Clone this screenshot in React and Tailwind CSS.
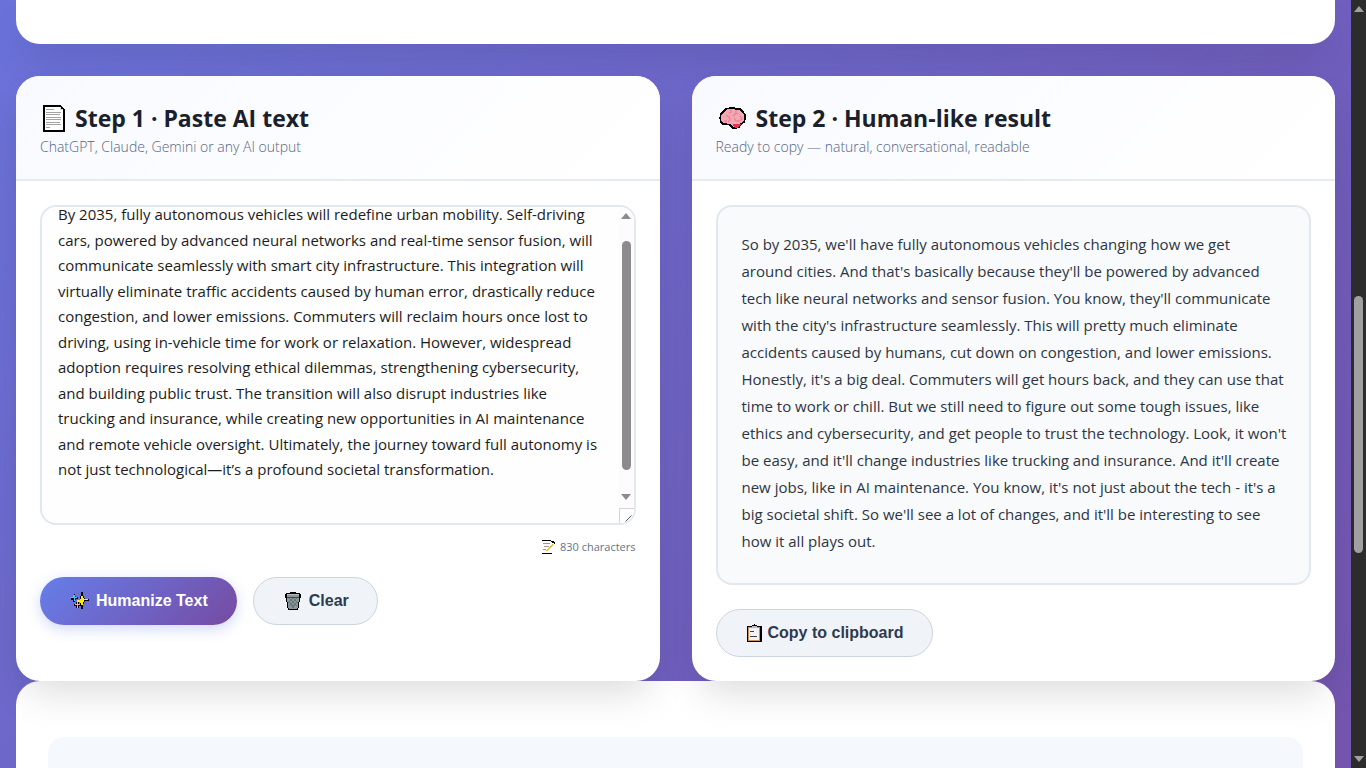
import { useLayoutEffect, useRef, useState } from "react";

const AI_TEXT =
  "By 2035, fully autonomous vehicles will redefine urban mobility. Self-driving cars, powered by advanced neural networks and real-time sensor fusion, will communicate seamlessly with smart city infrastructure. This integration will virtually eliminate traffic accidents caused by human error, drastically reduce congestion, and lower emissions. Commuters will reclaim hours once lost to driving, using in-vehicle time for work or relaxation. However, widespread adoption requires resolving ethical dilemmas, strengthening cybersecurity, and building public trust. The transition will also disrupt industries like trucking and insurance, while creating new opportunities in AI maintenance and remote vehicle oversight. Ultimately, the journey toward full autonomy is not just technological—it’s a profound societal transformation.\n\n";

const HUMAN_TEXT = `So by 2035, we'll have fully autonomous vehicles changing how we get
around cities. And that's basically because they'll be powered by advanced
tech like neural networks and sensor fusion. You know, they'll communicate
with the city's infrastructure seamlessly. This will pretty much eliminate
accidents caused by humans, cut down on congestion, and lower emissions.
Honestly, it's a big deal. Commuters will get hours back, and they can use that
time to work or chill. But we still need to figure out some tough issues, like
ethics and cybersecurity, and get people to trust the technology. Look, it won't
be easy, and it'll change industries like trucking and insurance. And it'll create
new jobs, like in AI maintenance. You know, it's not just about the tech - it's a
big societal shift. So we'll see a lot of changes, and it'll be interesting to see
how it all plays out.`;

function PageIcon() {
  return (
    <svg width="22" height="27" viewBox="0 0 22 27" shapeRendering="crispEdges" aria-hidden="true">
      <path d="M0 0h18v1h1v1h1v1h1v1h1v23H0z" fill="#000" />
      <path d="M2 2h15v2h1v1h2v20H2z" fill="#fff" />
      <path d="M17 2h1v2h2v1h-3z" fill="#d9d9d9" />
      <path
        d="M3 4h8v1H3zM3 7h15v1H3zM3 9h14v1H3zM3 12h15v1H3zM3 14h15v1H3zM3 17h14v1H3zM3 19h15v1H3zM3 22h4v1H3z"
        fill="#a3a3a3"
      />
    </svg>
  );
}

function BrainIcon() {
  return (
    <svg width="27" height="22" viewBox="0 0 27 22" aria-hidden="true">
      <path
        d="M11 1h4l2 1h4l3 3 2 3v4l-1 3-3 2-2 3-3 1h-3l-3-3-4-1H4l-2-2-1-4 1-4 3-3 2-2z"
        fill="#f4a6b4"
        stroke="#000"
        strokeWidth="1.500"
        shapeRendering="crispEdges"
      />
      <path d="M14 17h8l-1 1-1 2-2 1h-2l-2-3z" fill="#e0384e" shapeRendering="crispEdges" />
      <path
        d="M12 2v3l-2 1M7 8l3 2 1 3-2 2M14 9l3-3 2 1M17 6V3M15 11l2 3h3M21 9l2 3-3 2M5 14h3"
        fill="none"
        stroke="#e78595"
        strokeWidth="1.300"
      />
    </svg>
  );
}

function MemoIcon() {
  return (
    <svg width="14" height="14" viewBox="0 0 14 14" shapeRendering="crispEdges" aria-hidden="true">
      <path d="M0 0h9v1H0zM0 13h10v1H0z" fill="#000" />
      <path d="M1 3h7v1H1zM2 6h5v1H2zM1 9h3v1H1z" fill="#999" />
      <path d="M4 10h1V9h1V8h1V7h1V6h1V5h1V4h1v2h-1v1H9v1H8v1H7v1H6v1H4z" fill="#f5b82e" />
      <path d="M9 1h3v1h1v2h-1V3h-2V2H9z" fill="#000" />
      <path d="M10 3h1v1h-1z" fill="#fff" />
    </svg>
  );
}

function SparklesIcon() {
  return (
    <svg width="21" height="18" viewBox="-2 0 21 18" shapeRendering="crispEdges" aria-hidden="true">
      <path d="M10 0h2v4h1v2h1v1h4v2h-4v1h-1v2h-1v5h-2v-5H9v-2H7V8h2V4h1z" fill="#000" />
      <path d="M10 4h2v2h1v1h4v1h-4v2h-1v3h-2v-2H9v-1H6V8h3V7h1z" fill="#ffe81a" />
      <path d="M3 2h1v2h1v1h2v2H5v1H4v2H2V8H0V5h2V3h1z" fill="#000" />
      <path d="M2 3h2v2h2v1H4v3H3V6H0V5h2z" fill="#33cdf5" />
      <path d="M5 10h3v2h2v2H8v2H5v-2H3v-2h2z" fill="#000" />
      <path d="M6 10h1v2h2v1H7v3H6v-3H4v-1h2z" fill="#ff9fc4" />
    </svg>
  );
}

function TrashIcon() {
  return (
    <svg width="21" height="18" viewBox="-3 0 21 18" shapeRendering="crispEdges" aria-hidden="true">
      <path d="M5 0h6v1h4v1h1v4h-1v4h-1v6h-1v2H3v-2H2v-6H1V6H0V2h1V1h4z" fill="#000" />
      <path d="M2 2h12v3H2zM2 6h12v4h-1v6h-1v1H4v-1H3v-6H2z" fill="#8b989b" />
      <path d="M2 2h12v1H2z" fill="#b4bfc1" />
      <path
        d="M4 6l8 8M8 6l5 5M4 10l5 6M12 6l-8 8M8 6l-5 5M12 10l-5 6"
        stroke="#67757a"
        fill="none"
      />
      <path d="M2 5h12v1H2z" fill="#3d484b" />
    </svg>
  );
}

function ClipboardIcon() {
  return (
    <svg width="17" height="18" viewBox="-2 0 17 18" shapeRendering="crispEdges" aria-hidden="true">
      <path d="M7 0h1v1h2v1h5v16H0V2h5V1h2z" fill="#000" />
      <path d="M1 3h12v14H1z" fill="#c98e5a" />
      <path d="M2 4h10v12H2z" fill="#f4f1f3" />
      <path d="M5 2h5v2H5z" fill="#b9b9b9" />
      <path d="M3 7h4v1H3zM3 12h7v1H3z" fill="#3f3f46" />
    </svg>
  );
}

function Arrow({ down, className }) {
  return (
    <svg width="10" height="6" viewBox="0 0 10 6" className={className} aria-hidden="true">
      <path d={down ? "M0 0h10L5 6z" : "M0 6h10L5 0z"} fill="currentColor" />
    </svg>
  );
}

function StepCard({ icon, title, subtitle, children }) {
  return (
    <section className="min-w-0 overflow-hidden rounded-3xl bg-white shadow-[0_20px_40px_-10px_rgba(0,0,0,0.15)]">
      <header className="border-b-2 border-[#e6ebf0] bg-linear-[135deg] from-[#f8faff] to-white px-6 pt-6 pb-[22px]">
        <h2 className="flex h-9 items-center gap-[10px] pl-[3px] text-[23px] font-bold text-[#1a202c]">
          {icon}
          {title}
        </h2>
        <p className="text-sm/[21px] font-light text-[#56657e]">{subtitle}</p>
      </header>
      <div className="p-6">{children}</div>
    </section>
  );
}

const pill =
  "flex h-12 cursor-pointer items-center gap-1.5 rounded-full border px-7 font-['Liberation_Sans',Arial,sans-serif] text-base font-bold";
const pillLight = "border-[#cbd5e0] bg-[#f0f4f9] text-[#2d3b50]";

export default function App() {
  const [text, setText] = useState(AI_TEXT);
  const inputRef = useRef(null);

  useLayoutEffect(() => {
    inputRef.current.scrollTop = 21;
  }, []);

  const handleCopy = () => {
    navigator.clipboard?.writeText(HUMAN_TEXT).catch(() => {});
  };

  return (
    <div className="flex h-screen overflow-hidden font-['Open_Sans','Segoe_UI',sans-serif]">
      <main className="min-w-0 flex-1 overflow-hidden bg-linear-[135deg] from-[#6a72d9] to-[#7354ae] px-4">
        <div className="h-11 rounded-b-3xl bg-white shadow-[0_20px_40px_-10px_rgba(0,0,0,0.15)]" />

        <div className="relative z-10 mt-8 grid grid-cols-2 gap-8">
          <StepCard
            icon={<PageIcon />}
            title="Step 1 · Paste AI text"
            subtitle="ChatGPT, Claude, Gemini or any AI output"
          >
            <div className="relative flex h-80 overflow-hidden rounded-2xl border-2 border-[#e2e8f0] bg-[#fefefe]">
              <textarea
                ref={inputRef}
                aria-label="AI text"
                value={text}
                onChange={(e) => setText(e.target.value)}
                className="h-full min-w-0 flex-1 resize-none p-4 text-[15px] leading-[1.7] text-[#1c1c1c] outline-none [scrollbar-width:none]"
              />
              {/* Scrollbar */}
              <div className="flex w-[15px] flex-col items-center bg-[#fcfcfc] pt-[6px] text-[#8b8b8b]">
                <Arrow />
                <div className="mt-[22px] h-[229px] w-[9px] rounded-full bg-[#8b8b8b]" />
                <Arrow down className="mt-6" />
              </div>
              <svg width="15" height="15" viewBox="0 0 15 15" className="absolute right-0 bottom-0" aria-hidden="true">
                <path d="M0 0h15v15H0z" fill="#fff" />
                <path d="M.5 15V.5H15" fill="none" stroke="#d4d4d4" />
                <path d="M6.500 13.500l6-6M10.500 13.500l3-3" stroke="#555" fill="none" />
              </svg>
            </div>
            <div className="mt-3 mb-5 flex h-5 items-center justify-end gap-1 text-[11px] text-[#64748b]">
              <MemoIcon />
              {text.length} characters
            </div>
            <div className="flex gap-4">
              <button
                type="button"
                className={`${pill} border-transparent bg-linear-[135deg] from-[#667eea] to-[#764ba2] bg-origin-border text-white shadow-[0_4px_14px_rgba(102,126,234,0.3)]`}
              >
                <SparklesIcon />
                Humanize Text
              </button>
              <button type="button" onClick={() => setText("")} className={`${pill} ${pillLight}`}>
                <TrashIcon />
                Clear
              </button>
            </div>
          </StepCard>

          <StepCard
            icon={<BrainIcon />}
            title="Step 2 · Human-like result"
            subtitle="Ready to copy — natural, conversational, readable"
          >
            <div className="min-h-[380px] rounded-2xl border-2 border-[#e2e8f0] bg-[#f8fafc] py-6 pr-4 pl-6 text-[15px] leading-[1.8] whitespace-pre-line text-[#2d3543]">
              {HUMAN_TEXT}
            </div>
            <button type="button" onClick={handleCopy} className={`${pill} ${pillLight} mt-6`}>
              <ClipboardIcon />
              Copy to clipboard
            </button>
          </StepCard>
        </div>

        <div className="rounded-3xl bg-white px-8 pt-14 pb-8">
          <div className="h-40 rounded-2xl bg-[#f5f9fd]" />
        </div>
      </main>

      {/* Page scrollbar */}
      <div className="flex w-[15px] flex-col items-center bg-[#2c2c2c] py-[6px] text-[#a0a0a0]">
        <Arrow />
        <div className="flex w-[9px] flex-1 flex-col">
          <div className="grow-[284]" />
          <div className="grow-[256] rounded-full bg-[#a0a0a0]" />
          <div className="grow-[203]" />
        </div>
        <Arrow down />
      </div>
    </div>
  );
}
